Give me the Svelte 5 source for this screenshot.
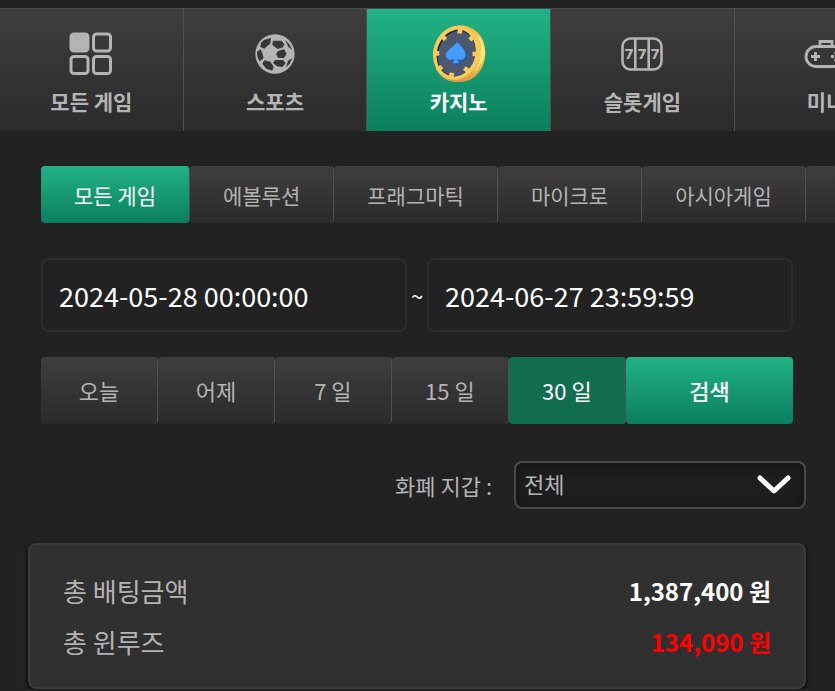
<script lang="ts">
	let activeCategory = $state("casino");
	let activeProvider = $state("모든 게임");
	let activeRange = $state("30 일");
	let dateFrom = $state("2024-05-28 00:00:00");
	let dateTo = $state("2024-06-27 23:59:59");
	let wallet = $state("전체");

	const categories = [
		{ id: "all", label: "모든 게임" },
		{ id: "sports", label: "스포츠" },
		{ id: "casino", label: "카지노" },
		{ id: "slot", label: "슬롯게임" },
		{ id: "mini", label: "미니" },
	];

	const providers = [
		"모든 게임",
		"에볼루션",
		"프래그마틱",
		"마이크로",
		"아시아게임",
		"드림게임",
	];

	const ranges = ["오늘", "어제", "7 일", "15 일", "30 일"];

	const totals = [
		{ label: "총 배팅금액", amount: "1,387,400 원", negative: false },
		{ label: "총 윈루즈", amount: "134,090 원", negative: true },
	];

	// notches around the rim of the casino chip: x, y, rotation
	const notches = [
		[88, 19, 10],
		[124, 41, 40],
		[135, 90, 90],
		[108, 138, 130],
		[62, 156, 10],
		[26, 134, 45],
		[16, 88, 90],
		[38, 40, 135],
	];
</script>

<nav class="categories">
	{#each categories as category}
		<a
			href="#{category.id}"
			class="category"
			class:active={activeCategory === category.id}
			onclick={() => (activeCategory = category.id)}
		>
			<span class="icon">
				{#if category.id === "all"}
					<svg width="44" height="44" viewBox="0 0 44 44" fill="none" stroke="currentColor" stroke-width="3">
						<rect x="2" y="2" width="17" height="17" rx="3" fill="currentColor" />
						<rect x="24.5" y="2" width="17" height="17" rx="3" />
						<rect x="2" y="24.5" width="17" height="17" rx="3" />
						<rect x="24.5" y="24.5" width="17" height="17" rx="3" />
					</svg>
				{:else if category.id === "sports"}
					<svg width="40" height="40" viewBox="14 15 120 120">
						<path
							fill="currentColor"
							fill-rule="evenodd"
							d="M15 75a59 59 0 1 0 118 0a59 59 0 1 0 -118 0Z
								M68 35 94 35 102 46 98 55 82 60 66 48Z
								M83 66 101 61 109 74 101 87 84 87 77 76Z
								M74 93 98 93 106 103 96 114 80 112 68 102Z
								M40 33 62 27 60 43 42 59 30 54 32 42Z
								M20 68 31 61 36 72 40 88 28 97 21 84Z
								M42 94 60 98 70 113 66 125 48 119 36 104Z
								M104 32 118 47 126 63 114 53Z
								M126 86 118 104 107 115 113 96Z"
						/>
					</svg>
				{:else if category.id === "casino"}
					<svg width="56" height="60" viewBox="0 0 170 180">
						<defs>
							<linearGradient id="chipSide" x1="0" y1="0" x2="0" y2="1">
								<stop offset="0" stop-color="#e8b64c" />
								<stop offset="0.5" stop-color="#ffd84f" />
								<stop offset="1" stop-color="#d99a45" />
							</linearGradient>
						</defs>
						<path
							d="M84 3C134 2 166 40 165 86C164 138 130 175 86 175C54 176 30 164 16 136L40 20Z"
							fill="url(#chipSide)"
						/>
						<path d="M134 28C162 56 160 108 128 148C154 124 164 98 161 74C157 50 148 36 134 28Z" fill="#ffe88c" />
						<ellipse cx="77" cy="86" rx="70" ry="83" transform="rotate(16 77 86)" fill="#f8cc5c" />
						<ellipse cx="76" cy="87" rx="58" ry="72" transform="rotate(16 76 87)" fill="#1c2430" />
						<ellipse cx="78" cy="89" rx="56" ry="70" transform="rotate(16 78 89)" fill="#4b5870" />
						{#each notches as [x, y, angle]}
							<rect
								x={x - 7}
								y={y - 9}
								width="14"
								height="18"
								rx="2"
								transform="rotate({angle} {x} {y})"
								fill="#f8cc5c"
							/>
						{/each}
						<path
							d="M84 58C98 70 110 82 109 97C108 112 92 116 85 108L90 122H71L76 108C66 116 52 110 50 100C48 84 70 74 84 58Z"
							fill="#1f5dab"
						/>
						<path
							d="M79 54C94 67 106 79 105 93C104 108 88 112 80 104L85 118H66L71 104C61 113 47 106 45 95C43 81 64 71 79 54Z"
							fill="#459cfb"
						/>
					</svg>
				{:else if category.id === "slot"}
					<svg width="42" height="34" viewBox="0 0 42 34">
						<g fill="none" stroke="currentColor" stroke-width="2.6">
							<rect x="1.5" y="1.5" width="39" height="31" rx="8" />
							<path d="M14.3 1.5V32.5M27.7 1.5V32.5" />
						</g>
						<g class="sevens">
							<text x="8" y="22">7</text>
							<text x="21" y="22">7</text>
							<text x="34" y="22">7</text>
						</g>
					</svg>
				{:else}
					<svg width="44" height="30" viewBox="0 0 44 30" fill="none" stroke="currentColor" stroke-width="2.8">
						<rect x="2" y="7.5" width="40" height="20" rx="10" />
						<path d="M16 7V2.5H28V7" />
						<path d="M7 17.5H16M11.5 13V22" />
						<g fill="currentColor" stroke="none">
							<circle cx="28.5" cy="17.5" r="1.8" />
							<circle cx="32" cy="14" r="1.8" />
							<circle cx="35.5" cy="17.5" r="1.8" />
							<circle cx="32" cy="21" r="1.8" />
						</g>
					</svg>
				{/if}
			</span>
			<span>{category.label}</span>
		</a>
	{/each}
</nav>

<main>
	<div class="filters">
		<div class="providers">
			{#each providers as provider}
				<button
					class="btn provider"
					class:primary={activeProvider === provider}
					onclick={() => (activeProvider = provider)}
				>
					{provider}
				</button>
			{/each}
		</div>

		<div class="dates">
			<input type="text" aria-label="시작일" bind:value={dateFrom} />
			<span>~</span>
			<input type="text" aria-label="종료일" bind:value={dateTo} />
		</div>

		<div class="ranges">
			{#each ranges as range}
				<button
					class="btn"
					class:selected={activeRange === range}
					onclick={() => (activeRange = range)}
				>
					{range}
				</button>
			{/each}
			<button class="btn primary search">검색</button>
		</div>
	</div>

	<div class="wallet">
		<label for="wallet">화폐 지갑 :</label>
		<div class="select">
			<select id="wallet" bind:value={wallet}>
				<option>전체</option>
			</select>
			<svg width="34" height="20" viewBox="0 0 34 20">
				<path
					d="M3 3 17 16 31 3"
					fill="none"
					stroke="#fff"
					stroke-width="5"
					stroke-linecap="round"
					stroke-linejoin="round"
				/>
			</svg>
		</div>
	</div>

	<dl class="totals">
		{#each totals as total}
			<div>
				<dt>{total.label}</dt>
				<dd class:negative={total.negative}>{total.amount}</dd>
			</div>
		{/each}
	</dl>
</main>

<style>
	:global(body) {
		background: #222;
		color: #b4b4b4;
		font-family: "Noto Sans CJK KR", sans-serif;
		overflow: hidden;
	}

	button,
	input,
	select {
		font-family: inherit;
		box-sizing: border-box;
		margin: 0;
	}

	.categories {
		display: flex;
		margin-top: 8px;
		border-top: 1px solid #4a4a4a;
		overflow: hidden;
	}

	.category {
		flex: 0 0 22%;
		box-sizing: border-box;
		display: flex;
		flex-direction: column;
		align-items: center;
		padding: 14px 0;
		border-right: 1px solid #505050;
		background: linear-gradient(#3e3e3e, #2b2b2b);
		color: #b4b4b4;
		font-size: 21px;
		line-height: 32px;
		font-weight: 700;
		text-decoration: none;
	}

	.category.active {
		background: linear-gradient(#22b285, #0b7f5d);
		color: #fff;
	}

	.icon {
		height: 62px;
		display: flex;
		align-items: center;
	}

	.sevens {
		font-family: "DejaVu Sans", sans-serif;
		font-size: 14px;
		font-weight: 700;
		fill: currentColor;
		text-anchor: middle;
	}

	.filters {
		display: flex;
		flex-direction: column;
		padding: 35px 42px 0 41px;
	}

	.btn {
		border: none;
		border-right: 1px solid #505050;
		border-radius: 4px;
		padding: 0 0 2px;
		background: linear-gradient(#3e3e3e, #2b2b2b);
		color: #b4b4b4;
		font-size: 22px;
		cursor: pointer;
	}

	.btn.primary {
		background: linear-gradient(#22b285, #0b7f5d);
		color: #fff;
	}

	.btn.selected {
		background: #136e50;
		color: #fff;
	}

	.btn.search {
		border-right: none;
		font-weight: 500;
	}

	.providers {
		display: flex;
		margin-right: -42px;
		overflow: hidden;
	}

	.provider {
		flex: none;
		height: 57px;
		padding: 0 33px;
		font-size: 21px;
	}

	.dates {
		display: flex;
		align-items: center;
		margin-top: 35px;
		color: #fff;
		font-size: 22px;
	}

	.dates span {
		width: 20px;
		text-align: center;
	}

	.dates input {
		flex: 1;
		min-width: 0;
		height: 74px;
		padding: 0 16px;
		border: 2px solid #2d2d2d;
		border-radius: 8px;
		background: transparent;
		color: #fff;
		font-size: 27px;
	}

	.ranges {
		display: grid;
		grid-template-columns: repeat(5, 7fr) 10fr;
		margin-top: 25px;
	}

	.ranges .btn {
		height: 67px;
	}

	.wallet {
		display: flex;
		justify-content: flex-end;
		align-items: center;
		gap: 22px;
		margin-top: 37px;
		padding-right: 29px;
		font-size: 22px;
	}

	.select {
		position: relative;
		width: 292px;
	}

	.select select {
		appearance: none;
		width: 100%;
		height: 48px;
		padding: 0 8px 4px;
		border: 2px solid #4a4a4a;
		border-radius: 8px;
		background: #1e1e1e;
		box-shadow: inset 0 0 12px #141414;
		color: #b4b4b4;
		font-size: 22px;
	}

	.select svg {
		position: absolute;
		right: 15px;
		top: 14px;
		pointer-events: none;
	}

	.totals {
		margin: 34px 29px 0 28px;
		padding: 20px 33px;
		border: 2px solid #3c3c3c;
		border-radius: 8px;
		background: #303030;
		box-shadow: 0 2px 4px #000;
		font-size: 26px;
		line-height: 51px;
	}

	.totals div {
		display: flex;
		justify-content: space-between;
	}

	.totals dd {
		margin: 0;
		color: #fff;
		font-size: 24px;
		font-weight: 700;
	}

	.totals dd.negative {
		color: #f00;
	}
</style>
